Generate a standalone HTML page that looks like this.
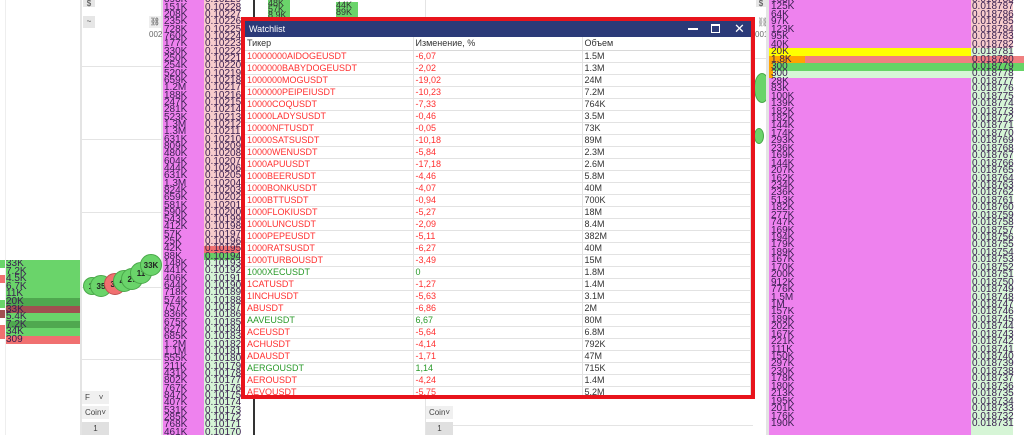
<!DOCTYPE html>
<html><head><meta charset="utf-8"><style>
*{margin:0;padding:0;box-sizing:border-box}
body{width:1024px;height:435px;overflow:hidden;background:#fff;position:relative;font-family:"Liberation Sans",sans-serif}
.a{position:absolute}
.col{position:absolute;font-size:10px;color:#3a2050;overflow:hidden}
.col div{white-space:nowrap}
.lc div{height:7.33px;line-height:7.33px}
.rc div{height:7.45px;line-height:7.45px}
.win{position:absolute;left:241px;top:17px;width:514px;height:382px;border:4px solid #e8141c;background:#fff;overflow:hidden}
.tb{height:16px;background:#2b3a78;color:#fff;font-size:9px;line-height:16px;padding-left:4px;position:relative}
table{border-collapse:collapse;font-size:9px;width:505px;table-layout:fixed}
td{height:12.04px;line-height:11px;border-bottom:1px solid #e2e2e2;border-right:1px solid #e2e2e2;padding-left:2px;white-space:nowrap;overflow:hidden;color:#ff3030}
td.v{color:#333}
td.g{color:#2a9a2a}
tr.h td{height:13px;color:#333;border-bottom:1px solid #d8d8d8}
.bub{position:absolute;border-radius:50%;background:#6ad46a;border:1px solid #4aa84a;font-size:9px;font-weight:bold;color:#222;text-align:center}
.btn{position:absolute;background:#e6e6e6;font-size:8px;color:#444;text-align:center}
</style></head><body>
<!-- left strip -->
<div class="a" style="left:0;top:260px;width:5px;height:8px;background:#6ad46a"></div>
<div class="a" style="left:0;top:275px;width:5px;height:8px;background:#f07070"></div>
<div class="a" style="left:0;top:300px;width:5px;height:8px;background:#6ad46a"></div>
<div class="a" style="left:0;top:310px;width:5px;height:8px;background:#a05050"></div>
<div class="a" style="left:0;top:325px;width:5px;height:14px;background:#f07070"></div>
<div class="a" style="left:5px;top:0;width:1px;height:435px;background:#eee"></div>
<div class="col" style="left:6px;top:260px;width:74px;font-size:10px">
<div style="height:7.6px;line-height:7.6px;background:#6ad46a">33K</div>
<div style="height:7.6px;line-height:7.6px;background:#6ad46a">7.2K</div>
<div style="height:7.6px;line-height:7.6px;background:#6ad46a">4.5K</div>
<div style="height:7.6px;line-height:7.6px;background:#6ad46a">6.7K</div>
<div style="height:7.6px;line-height:7.6px;background:#6ad46a">11K</div>
<div style="height:7.6px;line-height:7.6px;background:#4fa84f">20K</div>
<div style="height:7.6px;line-height:7.6px;background:#a05050">33K</div>
<div style="height:7.6px;line-height:7.6px;background:#6ad46a">5.4K</div>
<div style="height:7.6px;line-height:7.6px;background:#4fa84f">7.2K</div>
<div style="height:7.6px;line-height:7.6px;background:#6ad46a">34K</div>
<div style="height:7.6px;line-height:7.6px;background:#f07070">309</div>
</div>
<div class="a" style="left:80px;top:0;width:2px;height:435px;background:#e4e4e4"></div>
<div class="a" style="left:82px;top:66px;width:80px;height:1px;background:#e4e4e4"></div>
<div class="a" style="left:82px;top:139px;width:80px;height:1px;background:#e4e4e4"></div>
<div class="a" style="left:82px;top:212px;width:80px;height:1px;background:#e4e4e4"></div>
<div class="a" style="left:82px;top:287px;width:80px;height:1px;background:#e4e4e4"></div>
<div class="a" style="left:82px;top:359px;width:80px;height:1px;background:#e4e4e4"></div>
<div class="a" style="left:161px;top:0;width:2px;height:435px;background:#e4e4e4"></div>
<div class="btn" style="left:83px;top:0;width:12px;height:7px;line-height:7px">$</div>
<div class="btn" style="left:83px;top:16px;width:12px;height:12px;line-height:12px">~</div>
<div class="btn" style="left:149px;top:16px;width:12px;height:12px;line-height:12px;background:#eee">⛓</div>
<div class="a" style="left:149px;top:30px;font-size:8px;color:#666">002</div>
<div class="bub" style="left:83px;top:277px;width:18px;height:18px;line-height:18px;font-size:8px">1:</div>
<div class="bub" style="left:90px;top:275px;width:22px;height:22px;line-height:22px;font-size:8px">35</div>
<div class="bub" style="left:104px;top:273px;width:22px;height:22px;line-height:22px;background:#f07070;border-color:#c05050;font-size:8px">30</div>
<div class="bub" style="left:113px;top:270px;width:22px;height:22px;line-height:22px;font-size:8px">41</div>
<div class="bub" style="left:121px;top:268px;width:22px;height:22px;line-height:22px;font-size:8px">27</div>
<div class="bub" style="left:130px;top:262px;width:22px;height:22px;line-height:22px;font-size:8px">11</div>
<div class="bub" style="left:140px;top:254px;width:22px;height:22px;line-height:22px;font-size:8px">33K</div>
<div class="btn" style="left:82px;top:391px;width:27px;height:13px;line-height:13px;background:#f0f0f0;text-align:left;padding-left:3px">F &nbsp;&nbsp;&nbsp;˅</div>
<div class="btn" style="left:82px;top:406px;width:27px;height:13px;line-height:13px;background:#f0f0f0">Coin˅</div>
<div class="btn" style="left:82px;top:422px;width:27px;height:13px;line-height:13px;background:#e0e0e0">1</div>

<!-- left magenta + price -->
<div class="a" style="left:163px;top:0;width:41px;height:435px;background:#ee82ee"></div>
<div class="a" style="left:204px;top:0;width:36px;height:245.5px;background:#f7cccc"></div>
<div class="a" style="left:204px;top:245.5px;width:36px;height:7.33px;background:#f07070"></div>
<div class="a" style="left:204px;top:252.8px;width:36px;height:7.33px;background:#66cc66"></div>
<div class="a" style="left:204px;top:260.2px;width:36px;height:175px;background:#d6f5d6"></div>
<div class="col lc" style="left:164px;top:-3.7px;width:40px">
<div>893K</div><div>151K</div><div>208K</div><div>235K</div><div>728K</div><div>760K</div><div>177K</div><div>330K</div><div>250K</div><div>254K</div><div>520K</div><div>659K</div><div>1.2M</div><div>188K</div><div>247K</div><div>281K</div><div>523K</div><div>1.3M</div><div>1.3M</div><div>631K</div><div>809K</div><div>480K</div><div>604K</div><div>444K</div><div>631K</div><div>1.3M</div><div>824K</div><div>659K</div><div>581K</div><div>590K</div><div>543K</div><div>412K</div><div>57K</div><div>25K</div><div>42K</div><div>88K</div><div>148K</div><div>441K</div><div>406K</div><div>644K</div><div>718K</div><div>574K</div><div>757K</div><div>836K</div><div>675K</div><div>627K</div><div>685K</div><div>1.2M</div><div>1.1M</div><div>555K</div><div>211K</div><div>431K</div><div>802K</div><div>767K</div><div>847K</div><div>407K</div><div>531K</div><div>285K</div><div>768K</div><div>461K</div>
</div>
<div class="col lc" style="left:205px;top:-3.7px;width:36px">
<div>0.10229</div><div>0.10228</div><div>0.10227</div><div>0.10226</div><div>0.10225</div><div>0.10224</div><div>0.10223</div><div>0.10222</div><div>0.10221</div><div>0.10220</div><div>0.10219</div><div>0.10218</div><div>0.10217</div><div>0.10216</div><div>0.10215</div><div>0.10214</div><div>0.10213</div><div>0.10212</div><div>0.10211</div><div>0.10210</div><div>0.10209</div><div>0.10208</div><div>0.10207</div><div>0.10206</div><div>0.10205</div><div>0.10204</div><div>0.10203</div><div>0.10202</div><div>0.10201</div><div>0.10200</div><div>0.10199</div><div>0.10198</div><div>0.10197</div><div>0.10196</div><div>0.10195</div><div>0.10194</div><div>0.10193</div><div>0.10192</div><div>0.10191</div><div>0.10190</div><div>0.10189</div><div>0.10188</div><div>0.10187</div><div>0.10186</div><div>0.10185</div><div>0.10184</div><div>0.10183</div><div>0.10182</div><div>0.10181</div><div>0.10180</div><div>0.10179</div><div>0.10178</div><div>0.10177</div><div>0.10176</div><div>0.10175</div><div>0.10174</div><div>0.10173</div><div>0.10172</div><div>0.10171</div><div>0.10170</div>
</div>

<!-- middle behind window -->
<div class="a" style="left:253px;top:0;width:2px;height:17px;background:#333"></div>
<div class="a" style="left:253px;top:398px;width:2px;height:37px;background:#333"></div>
<div class="a" style="left:268px;top:0;width:22px;height:17px;background:#6ad46a;font-size:9px;line-height:6px;color:#333">48K<br>57K<br>8.9K</div>
<div class="a" style="left:336px;top:2px;width:22px;height:15px;background:#6ad46a;font-size:9px;line-height:7px;color:#333">44K<br>89K</div>
<div class="a" style="left:425px;top:0;width:1px;height:435px;background:#e4e4e4"></div>
<div class="btn" style="left:426px;top:406px;width:27px;height:13px;line-height:13px;background:#f0f0f0">Coin˅</div>
<div class="btn" style="left:426px;top:422px;width:27px;height:13px;line-height:13px;background:#e0e0e0">1</div>
<div class="a" style="left:453px;top:425px;width:300px;height:1px;background:#e4e4e4"></div>

<!-- right strip -->
<div class="btn" style="left:756px;top:0;width:10px;height:7px;line-height:7px">$</div>
<div class="a" style="left:757px;top:17px;font-size:9px;color:#777">⛓</div>
<div class="a" style="left:755px;top:30px;font-size:8px;color:#666">001</div>
<div class="a" style="left:755px;top:58px;width:12px;height:1px;background:#e4e4e4"></div>
<div class="bub" style="left:754px;top:73px;width:16px;height:30px;border-radius:50%"></div>
<div class="bub" style="left:754px;top:128px;width:10px;height:16px"></div>
<div class="a" style="left:766px;top:0;width:3px;height:435px;background:#e4e4e4"></div>

<!-- right magenta + price -->
<div class="a" style="left:769px;top:0;width:202px;height:435px;background:#ee82ee"></div>
<div class="a" style="left:971px;top:0;width:42px;height:48.2px;background:#f7cccc"></div>
<div class="a" style="left:971px;top:48.2px;width:42px;height:387px;background:#d6f5d6"></div>
<div class="a" style="left:769px;top:48.2px;width:202px;height:7.45px;background:#ffff00"></div>
<div class="a" style="left:769px;top:55.6px;width:255px;height:7.45px;background:#f08080"></div>
<div class="a" style="left:769px;top:55.6px;width:36px;height:7.45px;background:#ffa500"></div>
<div class="a" style="left:769px;top:63.1px;width:255px;height:7.45px;background:#66d466"></div>
<div class="a" style="left:769px;top:70.5px;width:202px;height:7.45px;background:#d6f5d6"></div>
<div class="a" style="left:769px;top:63.1px;width:4px;height:14.9px;background:#ffa500"></div>
<div class="col rc" style="left:771px;top:-4px;width:60px">
<div>163K</div><div>125K</div><div>64K</div><div>97K</div><div>123K</div><div>95K</div><div>40K</div><div>20K</div><div>1.8K</div><div>300</div><div>300</div><div>28K</div><div>83K</div><div>100K</div><div>139K</div><div>182K</div><div>182K</div><div>144K</div><div>174K</div><div>293K</div><div>236K</div><div>169K</div><div>144K</div><div>207K</div><div>162K</div><div>234K</div><div>236K</div><div>513K</div><div>182K</div><div>277K</div><div>747K</div><div>169K</div><div>194K</div><div>179K</div><div>189K</div><div>167K</div><div>170K</div><div>200K</div><div>912K</div><div>776K</div><div>1.5M</div><div>1M</div><div>157K</div><div>189K</div><div>202K</div><div>167K</div><div>221K</div><div>111K</div><div>150K</div><div>297K</div><div>230K</div><div>178K</div><div>180K</div><div>213K</div><div>195K</div><div>201K</div><div>176K</div><div>190K</div>
</div>
<div class="col rc" style="left:972px;top:-4px;width:45px">
<div>0.018788</div><div>0.018787</div><div>0.018786</div><div>0.018785</div><div>0.018784</div><div>0.018783</div><div>0.018782</div><div>0.018781</div><div>0.018780</div><div>0.018779</div><div>0.018778</div><div>0.018777</div><div>0.018776</div><div>0.018775</div><div>0.018774</div><div>0.018773</div><div>0.018772</div><div>0.018771</div><div>0.018770</div><div>0.018769</div><div>0.018768</div><div>0.018767</div><div>0.018766</div><div>0.018765</div><div>0.018764</div><div>0.018763</div><div>0.018762</div><div>0.018761</div><div>0.018760</div><div>0.018759</div><div>0.018758</div><div>0.018757</div><div>0.018756</div><div>0.018755</div><div>0.018754</div><div>0.018753</div><div>0.018752</div><div>0.018751</div><div>0.018750</div><div>0.018749</div><div>0.018748</div><div>0.018747</div><div>0.018746</div><div>0.018745</div><div>0.018744</div><div>0.018743</div><div>0.018742</div><div>0.018741</div><div>0.018740</div><div>0.018739</div><div>0.018738</div><div>0.018737</div><div>0.018736</div><div>0.018735</div><div>0.018734</div><div>0.018733</div><div>0.018732</div><div>0.018731</div>
</div>

<!-- window -->
<div class="win">
<div class="tb">Watchlist
<span class="a" style="left:443px;top:7px;width:10px;height:1.5px;background:#fff"></span>
<span class="a" style="left:466px;top:3px;width:9px;height:9px;border:1px solid #fff;border-top:2px solid #fff"></span>
<span class="a" style="left:489px;top:0;font-size:13px;line-height:16px">✕</span>
</div>
<table>
<colgroup><col style="width:168px"><col style="width:169px"><col style="width:168px"></colgroup>
<tr class="h"><td>Тикер</td><td>Изменение, %</td><td>Объем</td></tr>
<tr><td>10000000AIDOGEUSDT</td><td>-6,07</td><td class="v">1.5M</td></tr>
<tr><td>1000000BABYDOGEUSDT</td><td>-2,02</td><td class="v">1.3M</td></tr>
<tr><td>1000000MOGUSDT</td><td>-19,02</td><td class="v">24M</td></tr>
<tr><td>1000000PEIPEIUSDT</td><td>-10,23</td><td class="v">7.2M</td></tr>
<tr><td>10000COQUSDT</td><td>-7,33</td><td class="v">764K</td></tr>
<tr><td>10000LADYSUSDT</td><td>-0,46</td><td class="v">3.5M</td></tr>
<tr><td>10000NFTUSDT</td><td>-0,05</td><td class="v">73K</td></tr>
<tr><td>10000SATSUSDT</td><td>-10,18</td><td class="v">89M</td></tr>
<tr><td>10000WENUSDT</td><td>-5,84</td><td class="v">2.3M</td></tr>
<tr><td>1000APUUSDT</td><td>-17,18</td><td class="v">2.6M</td></tr>
<tr><td>1000BEERUSDT</td><td>-4,46</td><td class="v">5.8M</td></tr>
<tr><td>1000BONKUSDT</td><td>-4,07</td><td class="v">40M</td></tr>
<tr><td>1000BTTUSDT</td><td>-0,94</td><td class="v">700K</td></tr>
<tr><td>1000FLOKIUSDT</td><td>-5,27</td><td class="v">18M</td></tr>
<tr><td>1000LUNCUSDT</td><td>-2,09</td><td class="v">8.4M</td></tr>
<tr><td>1000PEPEUSDT</td><td>-5,11</td><td class="v">382M</td></tr>
<tr><td>1000RATSUSDT</td><td>-6,27</td><td class="v">40M</td></tr>
<tr><td>1000TURBOUSDT</td><td>-3,49</td><td class="v">15M</td></tr>
<tr><td class="g">1000XECUSDT</td><td class="g">0</td><td class="v">1.8M</td></tr>
<tr><td>1CATUSDT</td><td>-1,27</td><td class="v">1.4M</td></tr>
<tr><td>1INCHUSDT</td><td>-5,63</td><td class="v">3.1M</td></tr>
<tr><td>ABUSDT</td><td>-6,86</td><td class="v">2M</td></tr>
<tr><td class="g">AAVEUSDT</td><td class="g">6,67</td><td class="v">80M</td></tr>
<tr><td>ACEUSDT</td><td>-5,64</td><td class="v">6.8M</td></tr>
<tr><td>ACHUSDT</td><td>-4,14</td><td class="v">792K</td></tr>
<tr><td>ADAUSDT</td><td>-1,71</td><td class="v">47M</td></tr>
<tr><td class="g">AERGOUSDT</td><td class="g">1,14</td><td class="v">715K</td></tr>
<tr><td>AEROUSDT</td><td>-4,24</td><td class="v">1.4M</td></tr>
<tr><td>AEVOUSDT</td><td>-5,75</td><td class="v">5.2M</td></tr>
</table>
</div>
</body></html>
